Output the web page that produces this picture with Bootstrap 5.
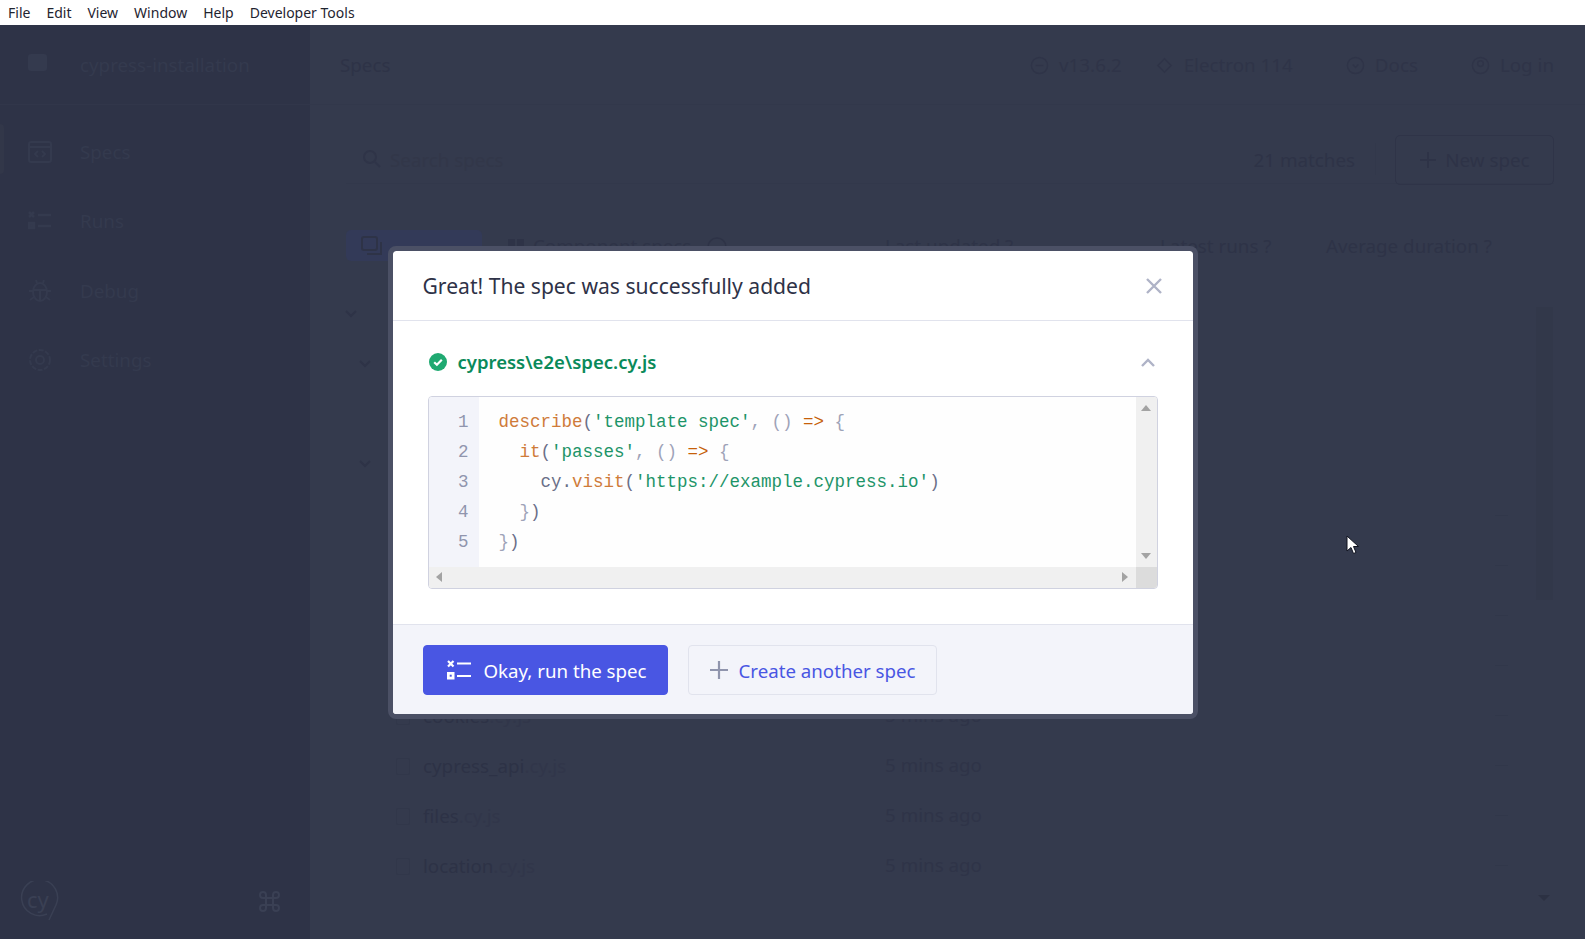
<!doctype html>
<html lang="en">
<head>
<meta charset="utf-8">
<title>Cypress</title>
<link href="https://cdn.jsdelivr.net/npm/bootstrap@5.3.0/dist/css/bootstrap.min.css" rel="stylesheet">
<style>
html,body{height:100%;}
body{font-family:"Noto Sans","Open Sans",sans-serif;background:#343a4d;overflow:hidden;}
.menu-strip{height:25px;background:#fff;font-size:14px;line-height:25px;color:#1f2430;padding-left:8px;gap:16px;}
.app-area{height:914px;}
.side-rail{width:310px;background:#2e3347;color:#343a4e;font-size:18.8px;}
.side-head{height:80px;border-bottom:1px solid #31364a;padding:2px 0 0 28px;}
.side-head svg,.side-link svg{width:24px;height:24px;margin-right:28px;flex:none;}
.side-link{height:69.5px;padding-left:28px;position:relative;}
.side-nav{padding-top:12px;}
.side-mark{position:absolute;left:0;top:7px;width:4px;height:50px;background:#323749;border-radius:0 4px 4px 0;}
.side-foot{height:64px;padding:0 30px 0 19px;margin-bottom:6px;}
.main-area{background:#343a4d;color:#2e3347;font-size:18.8px;min-width:0;}
.main-head{height:80px;border-bottom:1px solid #32384b;padding:2px 31px 0 30px;}
.top-item{color:#2f3448;gap:10px;}
.top-item svg{width:19px;height:19px;}
.top-gap-a{margin-left:33px;}
.top-gap-b{margin-left:53px;}
.tool-row{height:49px;margin:30px 31px 0 36px;border-bottom:1px solid #32384b;padding-left:16px;}
.tool-find{color:#323749;padding-top:2px;}
.tool-count{padding:1px 20px 0 0;margin-right:19px;height:32px;border-right:1px solid #32384b;line-height:32px;}
.tool-btn{width:159px;height:50px;margin-bottom:-1px;border:1px solid #2f3448;border-radius:5px;padding-top:1px;}
.tab-head{margin:46px 0 0 36px;height:31px;position:relative;}
.tab-on{width:136px;height:31px;background:#333a58;border-radius:5px;padding-left:15px;color:#2e3347;}
.tab-off{margin-left:25px;padding-top:2px;}
.col-one{position:absolute;left:539px;top:1px;line-height:31px;}
.col-two{position:absolute;left:814px;top:1px;line-height:31px;}
.col-three{position:absolute;left:980px;top:1px;line-height:31px;}
.list-wrap{margin:30px 32px 0 36px;position:relative;}
.spec-row{height:50px;padding-left:77px;position:relative;color:#2d3246;}
.spec-row .dim-ext{color:#31364a;}
.row-box{position:absolute;left:50px;top:17px;width:14px;height:17px;border:1px solid #31374a;border-radius:2px;}
.row-time{position:absolute;left:539px;top:0;line-height:48px;color:#2f3448;}
.row-dash{position:absolute;left:1149px;top:24px;width:13px;height:1px;background:#31374a;}
.fold-row{position:absolute;left:-1px;width:12px;height:12px;}
.fold-top{top:16px;}
.fold-two{top:66px;left:13px;}
.fold-three{top:166px;left:13px;}
.rail-thumb{position:absolute;left:1190px;top:16px;width:17px;height:293px;background:#32384a;}
.rail-arrow{position:absolute;left:1192px;top:604px;width:0;height:0;border:6px solid transparent;border-top:6px solid #2c3143;}
.pointer-mark{position:absolute;left:1346px;top:535px;width:14px;height:20px;z-index:1080;}
.overlay-box{position:absolute;inset:25px 0 0 0;z-index:1060;}
.sheet{width:810px;height:473px;border:5px solid #4b5065;border-radius:8px;background:#fff;background-clip:padding-box;overflow:hidden;}
.sheet-head{height:70px;border-bottom:1px solid #e1e3ed;padding:2px 30px 0;color:#2e3247;}
.sheet-title{font-size:21.1px;margin:0;font-weight:400;line-height:1.2;}
.sheet-body{height:303px;padding:0 35px;}
.file-line{height:75px;padding:8px 3px 0 1px;color:#0a8a5a;font-size:18.5px;font-weight:600;}
.file-line>div>span{margin-left:3px;}
.code-frame{width:730px;height:193px;border:1px solid #d0d2e0;border-radius:4px;overflow:hidden;}
.code-top{height:171px;}
.code-nums{width:50px;background:#f3f4fa;color:#9095ad;padding:10px 10px 0 0;text-align:right;}
.code-text{padding:10px 0 0 20px;background:#fefefe;min-width:0;white-space:pre;color:#5a5f7a;}
.code-nums,.code-text{font-family:"Liberation Mono","Courier New",monospace;font-size:17.5px;line-height:30px;}
.tk-fn{color:#cf7b3a;}.tk-str{color:#1d9468;}.tk-pn{color:#9ea3b8;}.tk-op{color:#c65f0a;}.tk-ob{color:#6a6f88;}
.bar-v{width:21px;background:#f0f0f0;padding:8px 0 8px;}
.bar-h{height:21px;background:#f0f0f0;padding-left:7px;}
.bar-corner{width:21px;height:21px;background:#dcdcdc;}
.arw-up{border-left:5px solid transparent;border-right:5px solid transparent;border-bottom:6px solid #a3a3a3;width:0;height:0;}
.arw-dn{border-left:5px solid transparent;border-right:5px solid transparent;border-top:6px solid #a3a3a3;width:0;height:0;}
.arw-lt{border-top:5px solid transparent;border-bottom:5px solid transparent;border-right:6px solid #a3a3a3;width:0;height:0;}
.arw-rt{border-top:5px solid transparent;border-bottom:5px solid transparent;border-left:6px solid #a3a3a3;width:0;height:0;margin-right:8px;}
.sheet-foot{height:90px;background:#f3f4fa;border-top:1px solid #e1e3ed;padding:2px 30px 0;gap:20px;}
.act-main,.act-alt{height:50px;font-size:18.7px;line-height:1;display:flex;align-items:center;border-radius:4px;padding:0;}
.act-main{width:245px;background:#4956e3;border:1px solid #4956e3;color:#fff;padding-left:23px;gap:12px;}
.act-alt{width:249px;background:#f3f4fa;border:1px solid #e1e3ed;color:#4956e3;padding-left:21px;gap:11px;}
.act-main:hover{background:#4956e3;color:#fff;}.act-alt:hover{background:#f3f4fa;color:#4956e3;}
.act-label{padding-top:2px;}
.close-x{line-height:0;margin-right:1px;}
</style>
</head>
<body>
<div class="menu-strip d-flex">
  <span>File</span><span>Edit</span><span>View</span><span>Window</span><span>Help</span><span>Developer Tools</span>
</div>
<div class="app-area d-flex">
  <aside class="side-rail d-flex flex-column flex-shrink-0">
    <div class="side-head d-flex align-items-center">
      <svg viewBox="0 0 24 24"><rect x="0" y="0" width="19" height="17" rx="3" fill="#343a4e"/></svg>
      <span>cypress-installation</span>
    </div>
    <div class="side-nav flex-grow-1">
      <div class="side-link d-flex align-items-center"><i class="side-mark"></i>
        <svg viewBox="0 0 24 24" fill="none" stroke="#343a4e" stroke-width="2"><rect x="1" y="2" width="22" height="20" rx="2"/><path d="M1 7h22M10 11l-3 3 3 3M14 11l3 3-3 3"/></svg><span>Specs</span></div>
      <div class="side-link d-flex align-items-center">
        <svg viewBox="0 0 24 24" fill="none" stroke="#343a4e" stroke-width="2.5"><path d="M1 3l5 5M6 3l-5 5M10 6h13M10 17h13"/><rect x="1" y="14" width="5" height="5" fill="#343a4e"/></svg><span>Runs</span></div>
      <div class="side-link d-flex align-items-center">
        <svg viewBox="0 0 24 24" fill="none" stroke="#343a4e" stroke-width="2"><ellipse cx="12" cy="13" rx="7" ry="9"/><path d="M5 11h14M12 11v11M9 4L8 1M15 4l1-3M5 12H1M19 12h4M6 18l-4 3M18 18l4 3"/></svg><span>Debug</span></div>
      <div class="side-link d-flex align-items-center">
        <svg viewBox="0 0 24 24" fill="none" stroke="#343a4e" stroke-width="2"><circle cx="12" cy="12" r="4"/><circle cx="12" cy="12" r="10" stroke-dasharray="5 1.5"/></svg><span>Settings</span></div>
    </div>
    <div class="side-foot d-flex align-items-center justify-content-between">
      <svg width="40" height="40" viewBox="0 0 40 40" fill="none" stroke="#3a4054" stroke-width="1.5"><path d="M28 33A18 18 0 1 1 37 24L30 39"/><text x="8" y="27" font-size="22" fill="#3a4054" stroke="none" font-family="Noto Sans,sans-serif">cy</text></svg>
      <svg width="21" height="21" viewBox="0 0 21 21" fill="none" stroke="#3a4054" stroke-width="2"><path d="M7 7h7v7H7zM7 7H4a3 3 0 1 1 3-3zM14 7V4a3 3 0 1 1 3 3zM14 14h3a3 3 0 1 1-3 3zM7 14v3a3 3 0 1 1-3-3z"/></svg>
    </div>
  </aside>
  <main class="main-area flex-grow-1">
    <div class="main-head d-flex align-items-center">
      <span class="me-auto">Specs</span>
      <span class="top-item d-flex align-items-center"><svg viewBox="0 0 20 20" fill="none" stroke="#2f3448" stroke-width="1.5"><circle cx="10" cy="10" r="8.5"/><path d="M6 10h8"/></svg>v13.6.2</span>
      <span class="top-item top-gap-a d-flex align-items-center"><svg viewBox="0 0 20 20" fill="none" stroke="#2f3448" stroke-width="1.5"><path d="M3 10l7-7 7 7-7 7z"/></svg>Electron 114</span>
      <span class="top-item top-gap-b d-flex align-items-center"><svg viewBox="0 0 20 20" fill="none" stroke="#2f3448" stroke-width="1.5"><circle cx="10" cy="10" r="8.5"/><path d="M7 9l3 3 3-3"/></svg>Docs</span>
      <span class="top-item top-gap-b d-flex align-items-center"><svg viewBox="0 0 20 20" fill="none" stroke="#2f3448" stroke-width="1.5"><circle cx="10" cy="10" r="8.5"/><circle cx="10" cy="8" r="3"/></svg>Log in</span>
    </div>
    <div class="tool-row d-flex align-items-center">
      <svg width="20" height="20" viewBox="0 0 20 20" fill="none" stroke="#2f3448" stroke-width="2"><circle cx="8" cy="8" r="6"/><path d="M13 13l5 5"/></svg>
      <span class="tool-find ms-2 me-auto">Search specs</span>
      <span class="tool-count">21 matches</span>
      <span class="tool-btn d-flex align-items-center justify-content-center gap-2"><svg width="18" height="18" viewBox="0 0 18 18" stroke="#2e3347" stroke-width="2"><path d="M9 1v16M1 9h16"/></svg>New spec</span>
    </div>
    <div class="tab-head d-flex align-items-center">
      <span class="tab-on d-flex align-items-center"><svg width="22" height="20" viewBox="0 0 22 20" fill="none" stroke="#2e3347" stroke-width="2"><rect x="1" y="1" width="15" height="13" rx="2"/><path d="M20 6v12H6"/></svg></span>
      <span class="tab-off d-flex align-items-center gap-2"><svg width="18" height="18" viewBox="0 0 18 18" fill="#2e3347"><rect x="1" y="1" width="7" height="7"/><rect x="1" y="10" width="7" height="7"/><rect x="10" y="1" width="7" height="7"/></svg>Component specs<svg class="ms-2" width="20" height="20" viewBox="0 0 20 20" fill="none" stroke="#2e3347" stroke-width="1.5"><circle cx="10" cy="10" r="9"/></svg></span>
      <span class="col-one">Last updated ?</span>
      <span class="col-two">Latest runs ?</span>
      <span class="col-three">Average duration ?</span>
    </div>
    <div class="list-wrap">
      <svg class="fold-row fold-top" viewBox="0 0 12 12" fill="none" stroke="#2e3347" stroke-width="2"><path d="M1 4l5 5 5-5"/></svg>
      <svg class="fold-row fold-two" viewBox="0 0 12 12" fill="none" stroke="#2e3347" stroke-width="2"><path d="M1 4l5 5 5-5"/></svg>
      <svg class="fold-row fold-three" viewBox="0 0 12 12" fill="none" stroke="#2e3347" stroke-width="2"><path d="M1 4l5 5 5-5"/></svg>
      <div class="spec-row"></div><div class="spec-row"></div><div class="spec-row"></div><div class="spec-row"></div>
      <div class="spec-row"><i class="row-dash"></i></div>
      <div class="spec-row"><i class="row-dash"></i></div>
      <div class="spec-row"><i class="row-dash"></i></div>
      <div class="spec-row"><i class="row-dash"></i></div>
      <div class="spec-row d-flex align-items-center"><i class="row-box"></i>cookies<span class="dim-ext">.cy.js</span><span class="row-time">5 mins ago</span><i class="row-dash"></i></div>
      <div class="spec-row d-flex align-items-center"><i class="row-box"></i>cypress_api<span class="dim-ext">.cy.js</span><span class="row-time">5 mins ago</span><i class="row-dash"></i></div>
      <div class="spec-row d-flex align-items-center"><i class="row-box"></i>files<span class="dim-ext">.cy.js</span><span class="row-time">5 mins ago</span><i class="row-dash"></i></div>
      <div class="spec-row d-flex align-items-center"><i class="row-box"></i>location<span class="dim-ext">.cy.js</span><span class="row-time">5 mins ago</span><i class="row-dash"></i></div>
      <i class="rail-thumb"></i><i class="rail-arrow"></i>
    </div>
  </main>
</div>

<div class="overlay-box d-flex align-items-center justify-content-center">
  <div class="sheet d-flex flex-column" role="dialog">
    <div class="sheet-head d-flex align-items-center justify-content-between">
      <h2 class="sheet-title">Great! The spec was successfully added</h2>
      <span class="close-x"><svg width="16" height="16" viewBox="0 0 16 16" stroke="#afb3c7" stroke-width="2.4" fill="none"><path d="M1 1l14 14M15 1L1 15"/></svg></span>
    </div>
    <div class="sheet-body">
      <div class="file-line d-flex align-items-center justify-content-between">
        <div class="d-flex align-items-center gap-2">
          <svg width="18" height="18" viewBox="0 0 18 18"><circle cx="9" cy="9" r="9" fill="#1fa971"/><path d="M5.2 9.200l2.700 2.600 4.900-5" fill="none" stroke="#fff" stroke-width="2.2"/></svg>
          <span>cypress\e2e\spec.cy.js</span>
        </div>
        <svg width="14" height="9" viewBox="0 0 14 9" fill="none" stroke="#afb3c7" stroke-width="2.4"><path d="M1 8l6-6 6 6"/></svg>
      </div>
      <div class="code-frame d-flex flex-column">
        <div class="code-top d-flex">
          <div class="code-nums flex-shrink-0">1<br>2<br>3<br>4<br>5</div>
          <div class="code-text flex-grow-1"><span class="tk-fn">describe</span><span class="tk-ob">(</span><span class="tk-str">'template spec'</span><span class="tk-pn">, () </span><span class="tk-op">=&gt;</span><span class="tk-pn"> {</span>
  <span class="tk-fn">it</span><span class="tk-ob">(</span><span class="tk-str">'passes'</span><span class="tk-pn">, () </span><span class="tk-op">=&gt;</span><span class="tk-pn"> {</span>
    <span class="tk-ob">cy.</span><span class="tk-fn">visit</span><span class="tk-ob">(</span><span class="tk-str">'https://example.cypress.io'</span><span class="tk-ob">)</span>
  <span class="tk-pn">}</span><span class="tk-ob">)</span>
<span class="tk-pn">}</span><span class="tk-ob">)</span></div>
          <div class="bar-v d-flex flex-column align-items-center justify-content-between flex-shrink-0"><i class="arw-up"></i><i class="arw-dn"></i></div>
        </div>
        <div class="d-flex flex-grow-1">
          <div class="bar-h d-flex align-items-center justify-content-between flex-grow-1"><i class="arw-lt"></i><i class="arw-rt"></i></div>
          <div class="bar-corner"></div>
        </div>
      </div>
    </div>
    <div class="sheet-foot d-flex align-items-center">
      <button type="button" class="btn act-main">
        <svg width="25" height="20" viewBox="0 0 25 20" fill="none" stroke="#fff" stroke-width="2.2"><path d="M1 1l5.500 5.500M6.500 1L1 6.500M10 3.500h14M10 16h14"/><rect x="0" y="12" width="7.500" height="7.500" fill="#fff" stroke="none"/><rect x="2.700" y="14.700" width="2" height="2" fill="#4956e3" stroke="none"/></svg>
        <span class="act-label">Okay, run the spec</span></button>
      <button type="button" class="btn act-alt">
        <svg width="18" height="18" viewBox="0 0 18 18" stroke="#9095ad" stroke-width="2.2"><path d="M9 0v18M0 9h18"/></svg>
        <span class="act-label">Create another spec</span></button>
    </div>
  </div>
</div>
<svg class="pointer-mark" viewBox="0 0 14 20"><path d="M1 1v15l4-3.500 2.500 6 2.500-1-2.500-6h5z" fill="#fff" stroke="#10131f" stroke-width="1"/></svg>
<script src="https://cdn.jsdelivr.net/npm/bootstrap@5.3.0/dist/js/bootstrap.bundle.min.js"></script>
</body>
</html>
